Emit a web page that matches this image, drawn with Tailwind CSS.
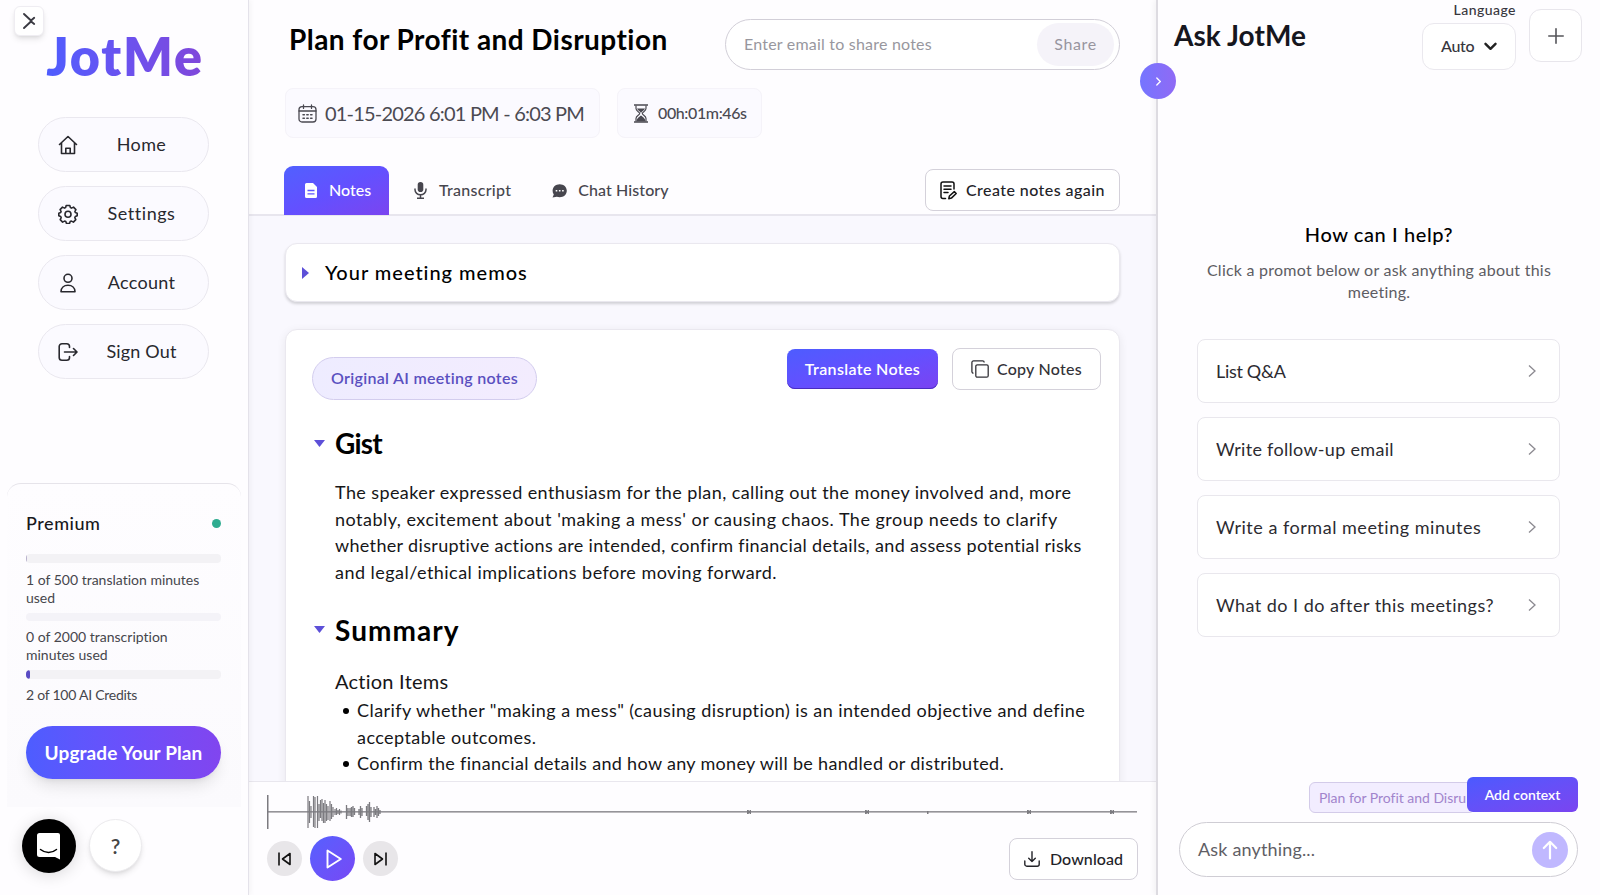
<!DOCTYPE html>
<html lang="en">
<head>
    <meta charset="UTF-8">
    <meta name="viewport" content="width=device-width, initial-scale=1.0">
    <title>JotMe - Plan for Profit and Disruption</title>
    <script src="https://cdn.jsdelivr.net/npm/@tailwindcss/browser@4"></script>
    <style>
        body {
            font-family: Lato, "Open Sans", sans-serif;
            font-variant-ligatures: none;
        }
    </style>
</head>
<body class="relative flex h-screen overflow-hidden bg-[#fefdff] text-black">

    <!-- Sidebar -->
    <aside class="relative flex w-[249px] shrink-0 flex-col border-r border-[#e4e2ea] bg-[#fefdff] shadow-[2px_0_5px_rgba(0,0,0,0.04)] z-10">
        <button class="absolute left-[14px] top-[6px] flex size-[30px] items-center justify-center rounded-md border border-[#efedf2] bg-white shadow-md">
            <svg class="h-[18px] w-[14px]" viewBox="0 0 14 18" fill="none" stroke="#3a3a42" stroke-width="1.9" stroke-linecap="round" stroke-linejoin="round"><path d="M2 2l7.5 7L2 16M12.2 5.8L8.5 9l3.7 3"/></svg>
        </button>
        <div class="mt-[23px] flex h-[66px] items-center justify-center">
            <span class="bg-linear-to-r from-[#4d5dff] via-[#6a52ef] to-[#8047da] bg-clip-text pl-[2px] text-[52px] font-extrabold leading-[66px] tracking-[0.035em] text-transparent">JotMe</span>
        </div>

        <nav class="mt-[28px] flex flex-col gap-[14px] pl-[38px] text-[18px] text-[#28282e]">
            <a class="flex h-[55px] w-[171px] items-center rounded-full border border-[#eae8ef] bg-[#fbfaff] pl-[19px]">
                <svg class="size-5" viewBox="0 0 20 20" fill="none" stroke="currentColor" stroke-width="1.6" stroke-linecap="round" stroke-linejoin="round"><path d="M1.5 9.5L10 1.5l8.500 8M3.500 8v10.500h13V8M7.800 18.500v-5.300h4.400v5.300"/></svg>
                <span class="ml-[13px] w-[101px] text-center tracking-[0.019em]">Home</span>
            </a>
            <a class="flex h-[55px] w-[171px] items-center rounded-full border border-[#eae8ef] bg-[#fbfaff] pl-[19px]">
                <svg class="size-5" viewBox="0 0 20 20" fill="none" stroke="currentColor" stroke-width="1.6" stroke-linejoin="round"><path d="M8.200 1.500h3.600l.6 2.100 1.100.5 2-1 2.400 2.500-1 1.900.4 1.100 1.900.7v2.400l-1.900.8-.5 1.200 1 1.900-2.400 2.500-2-1-1.200.5-.7 2H8.500l-.7-2-1.200-.5-2 1-2.400-2.500 1-1.900-.5-1.200-1.900-.8V9.300l1.900-.7.4-1.100-1-1.900 2.400-2.500 2 1 1.100-.5z"/><circle cx="10" cy="10.300" r="3"/></svg>
                <span class="ml-[13px] w-[101px] text-center tracking-[0.03em]">Settings</span>
            </a>
            <a class="flex h-[55px] w-[171px] items-center rounded-full border border-[#eae8ef] bg-[#fbfaff] pl-[19px]">
                <svg class="size-5" viewBox="0 0 20 20" fill="none" stroke="currentColor" stroke-width="1.6" stroke-linejoin="round"><circle cx="10" cy="5.300" r="4"/><path d="M3 18.700c0-4 2.900-6.400 7-6.400s7 2.400 7 6.400z"/></svg>
                <span class="ml-[13px] w-[101px] text-center tracking-[0.015em]">Account</span>
            </a>
            <a class="flex h-[55px] w-[171px] items-center rounded-full border border-[#eae8ef] bg-[#fbfaff] pl-[19px]">
                <svg class="size-5" viewBox="0 0 20 20" fill="none" stroke="currentColor" stroke-width="1.6" stroke-linecap="round" stroke-linejoin="round"><path d="M11.500 5.500V4.500a2.800 2.800 0 0 0-2.800-2.800H4a2.800 2.800 0 0 0-2.800 2.800v11A2.800 2.800 0 0 0 4 18.300h4.700a2.800 2.800 0 0 0 2.800-2.800v-1M6.500 10h12.300M15.500 6.500L19 10l-3.500 3.500"/></svg>
                <span class="ml-[13px] w-[101px] text-center tracking-[0.01em]">Sign Out</span>
            </a>
        </nav>

        <!-- Plan usage -->
        <section class="mx-[7px] mt-[104px] h-[324px] rounded-t-[14px] border-t border-[#e6e4ea] bg-linear-to-b from-[#fefdff] to-[#fbfafd] pl-[19px] pt-[27px] text-[14px] leading-[18px] text-[#46464c]">
            <div class="flex w-[195px] items-center justify-between">
                <h3 class="text-[18px] font-medium leading-6 tracking-[0.03em] text-[#18181c]">Premium</h3>
                <span class="size-[9px] rounded-full bg-[#2fac90]"></span>
            </div>
            <div class="mt-[19px] h-[9px] w-[195px] overflow-hidden rounded-sm bg-[#f3f2f5]">
                <div class="h-full bg-[#b9b2cc]" style="width: 0.5%"></div>
            </div>
            <p class="mt-[8px] w-[190px]">1 of 500 translation minutes used</p>
            <div class="mt-[6px] h-[8px] w-[195px] rounded-sm bg-[#f4f3f8]"></div>
            <p class="mt-[7px] w-[170px]">0 of 2000 transcription minutes used</p>
            <div class="mt-[6px] h-[9px] w-[195px] overflow-hidden rounded-sm bg-[#f3f2f5]">
                <div class="h-full rounded-sm bg-[#5a4cc4]" style="width: 2%"></div>
            </div>
            <p class="mt-[7px] tracking-[-0.018em]">2 of 100 AI Credits</p>
            <button class="mt-[22px] h-[53px] w-[195px] rounded-full bg-linear-to-r from-[#4d5dff] via-[#6a50fb] to-[#8145ef] text-[19px] font-bold tracking-[0.006em] text-white shadow-lg">Upgrade Your Plan</button>
        </section>

        <div class="mt-[12px] flex gap-[13px] pl-[22px]">
            <button class="flex size-[54px] items-center justify-center rounded-full bg-black shadow-[0_2px_16px_rgba(0,0,0,0.15)]">
                <svg class="size-7" viewBox="0 0 28 28"><path d="M4.500 1h18.500a2 2 0 0 1 2 2v24.500l-5-2.500H4.500a2.500 2.500 0 0 1-2.500-2.500V3.500A2.500 2.500 0 0 1 4.500 1z" fill="#fff"/><path d="M5.500 17.500c4.600 3.900 11.500 3.900 16 0" fill="none" stroke="#000" stroke-width="1.5" stroke-linecap="round"/></svg>
            </button>
            <button class="flex size-[53px] items-center justify-center rounded-full border border-[#ecebee] bg-white text-[21px] font-semibold text-[#444] shadow-md">?</button>
        </div>
    </aside>

    <!-- Meeting notes -->
    <main class="flex min-w-0 flex-1 flex-col">
        <header class="flex h-[216px] shrink-0 flex-col border-b-2 border-[#e8e6ee] px-9">
            <div class="flex items-start justify-between">
                <h1 class="ml-1 mt-[19px] text-[28px] font-bold leading-10 tracking-[0.016em]">Plan for Profit and Disruption</h1>
                <div class="mt-[19px] flex h-[51px] w-[395px] items-center justify-between rounded-full border border-[#d2cfd8] bg-white pl-[18px] pr-[5px] text-[16px]">
                    <span class="pb-px tracking-[0.013em] text-[#98979e]">Enter email to share notes</span>
                    <button class="h-[43px] w-[77px] rounded-full bg-[#f5f3f9] pb-px tracking-[0.04em] text-[#98959f]">Share</button>
                </div>
            </div>

            <div class="mt-[18px] flex gap-[17px] text-[#4b4a52]">
                <div class="flex h-[50px] w-[315px] items-center rounded-lg border border-[#f5f3f9] bg-[#fbfaff] pl-[12px]">
                    <svg class="size-[19px]" viewBox="0 0 19 19" fill="none" stroke="currentColor" stroke-width="1.3" stroke-linecap="round"><rect x="1" y="2.700" width="17" height="15.300" rx="3"/><path d="M1 7h17M5.500 1v3.400M13.500 1v3.400"/><path d="M5 10.800h1.400M8.800 10.800h1.400M12.600 10.800H14M5 14.200h1.400M8.800 14.200h1.400M12.600 14.200H14" stroke-width="1.500"/></svg>
                    <span class="ml-[8px] whitespace-nowrap text-[20px] tracking-[-0.04em]">01-15-2026 6:01 PM - 6:03 PM</span>
                </div>
                <div class="flex h-[50px] w-[145px] items-center rounded-lg border border-[#f5f3f9] bg-[#fbfaff] pl-[15px]">
                    <svg class="h-[19px] w-4" viewBox="0 0 16 19"><path d="M1 1h14M1 18h14" stroke="currentColor" stroke-width="1.600"/><path d="M3 1.500v3c0 2.500 3.700 3.500 3.700 5S3 12 3 14.500v3M13 1.500v3c0 2.500-3.700 3.500-3.700 5S13 12 13 14.500v3" fill="none" stroke="currentColor" stroke-width="1.200"/><path d="M4 4.500h8c-.6 2-3 2.800-4 4.500-1-1.700-3.400-2.500-4-4.500zM3.500 17.500c0-3 2.500-4.500 4.500-6 2 1.500 4.500 3 4.500 6z" fill="currentColor"/></svg>
                    <span class="ml-[9px] text-[16px] font-medium tracking-[-0.024em]">00h:01m:46s</span>
                </div>
            </div>

            <div class="mt-[28px] flex h-[49px] items-start justify-between text-[16px] font-medium">
                <div class="-ml-px flex text-[#47464e]">
                    <button class="flex h-[49px] w-[105px] items-center rounded-t-[9px] bg-linear-to-br from-[#5060ff] via-[#6350ff] to-[#7a44f0] pl-[21px] text-white">
                        <svg class="h-[15px] w-3" viewBox="0 0 12 15"><path d="M1.500 0H8l4 4v9.500a1.500 1.500 0 0 1-1.500 1.500h-9A1.500 1.500 0 0 1 0 13.500v-12A1.500 1.500 0 0 1 1.500 0z" fill="#fff"/><path d="M2.500 7.500h7M2.500 10.800h7" stroke="#5f55ff" stroke-width="1.300"/></svg>
                        <span class="ml-[12px] pb-[2px]">Notes</span>
                    </button>
                    <button class="ml-[25px] flex h-[49px] items-center">
                        <svg class="h-[17px] w-[13px]" viewBox="0 0 13 17"><rect x="3.700" y="0" width="5.600" height="10" rx="2.800" fill="currentColor"/><path d="M1 6.500v1.300a5.500 5 0 0 0 11 0V6.500M6.500 13v3M3 16.200h7" fill="none" stroke="currentColor" stroke-width="1.500"/></svg>
                        <span class="ml-[12px] pb-[2px] tracking-[0.017em]">Transcript</span>
                    </button>
                    <button class="ml-[41px] flex h-[49px] items-center">
                        <svg class="h-[14px] w-[15px]" viewBox="0 0 15 14"><path d="M7.700.3c4 0 7.100 2.800 7.100 6.500s-3.100 6.500-7.100 6.500c-1 0-2-.2-2.900-.5L.5 13.400l1.300-2.900A6.100 6.100 0 0 1 .6 6.800C.6 3.100 3.700.3 7.700.3z" fill="currentColor"/><path d="M3.700 6.800h1.600M6.900 6.800h1.600M10.100 6.800h1.600" stroke="#fff" stroke-width="1.500"/></svg>
                        <span class="ml-[11px] pb-[2px] tracking-[0.006em]">Chat History</span>
                    </button>
                </div>
                <button class="mt-[3px] flex h-[42px] w-[195px] items-center rounded-lg border border-[#d4d1da] bg-white pl-[14px] text-[#232328]">
                    <svg class="h-[19px] w-[17px]" viewBox="0 0 17 19" fill="none" stroke="#111" stroke-width="1.500" stroke-linecap="round" stroke-linejoin="round"><path d="M14 8V3a2 2 0 0 0-2-2H3a2 2 0 0 0-2 2v12.500a2 2 0 0 0 2 2h2.500M4 5h7M4 8.300h7M4 11.600h4"/><path d="M8.800 17.700l.6-2.700 4.900-4.400 1.900 1.900-4.800 4.600z"/></svg>
                    <span class="ml-[9px] tracking-[0.027em]">Create notes again</span>
                </button>
            </div>
        </header>

        <div class="flex min-h-0 flex-1 flex-col gap-[27px] overflow-hidden bg-[#f9f8fe] px-9 pt-[27px]">
            <div class="flex h-[59px] shrink-0 items-center rounded-xl border border-[#eae8ef] bg-white pl-[16px] shadow-[0_2px_3px_rgba(0,0,0,0.16)]">
                <svg class="h-3 w-[7px]" viewBox="0 0 7 12"><path d="M0 0l7 6-7 6z" fill="#5d50d8"/></svg>
                <h2 class="ml-[16px] pb-[2px] text-[20px] font-medium tracking-[0.049em]">Your meeting memos</h2>
            </div>

            <article class="h-[560px] shrink-0 rounded-xl border border-[#eae8ef] bg-white pl-[26px] pr-[18px] shadow-[0_2px_10px_rgba(0,0,0,0.07)]">
                <div class="flex justify-between">
                    <span class="mt-[27px] flex h-[43px] w-[225px] items-center justify-center rounded-full border border-[#d3cdee] bg-linear-to-r from-[#eeecff] to-[#f3ecfe] pb-[2px] text-[16px] font-semibold tracking-[0.019em] text-[#5a50c0]">Original AI meeting notes</span>
                    <div class="mt-[18px] flex items-center gap-[14px] self-start text-[16px]">
                        <button class="h-[40px] w-[151px] rounded-lg bg-linear-to-br from-[#4d5cff] via-[#6350ff] to-[#7a42f2] font-semibold tracking-[0.022em] text-white shadow-[inset_0_-1px_0_#4a2cc0]">Translate Notes</button>
                        <button class="flex h-[42px] w-[149px] items-center rounded-lg border border-[#d4d1da] bg-white pl-[18px] font-medium text-[#333238]">
                            <svg class="size-[18px]" viewBox="0 0 18 18" fill="none" stroke="currentColor" stroke-width="1.300" stroke-linejoin="round"><rect x="4.800" y="4.800" width="12.400" height="12.400" rx="1.500"/><path d="M2.500 13.200a1.600 1.600 0 0 1-1.600-1.600V2.500A1.600 1.600 0 0 1 2.500.9h9.100a1.600 1.600 0 0 1 1.600 1.600"/></svg>
                            <span class="ml-[8px] tracking-[0.015em]">Copy Notes</span>
                        </button>
                    </div>
                </div>

                <div class="mt-[23px] flex items-center pl-[2px]">
                    <svg class="h-[7px] w-[11px]" viewBox="0 0 11 7"><path d="M0 0h11L5.500 7z" fill="#5d50d8"/></svg>
                    <h2 class="ml-[10px] text-[28px] font-bold leading-10 tracking-[-0.03em]">Gist</h2>
                </div>
                <p class="mt-[16px] whitespace-nowrap pl-[23px] text-[18px] leading-[26.7px] tracking-[0.0225em] text-[#161618]">
                    The speaker expressed enthusiasm for the plan, calling out the money involved and, more<br>
                    <span class="tracking-[0.027em]">notably, excitement about 'making a mess' or causing chaos. The group needs to clarify</span><br>
                    <span class="tracking-[0.0185em]">whether disruptive actions are intended, confirm financial details, and assess potential risks</span><br>
                    <span class="tracking-[0.026em]">and legal/ethical implications before moving forward.</span>
                </p>

                <div class="mt-[24px] flex items-center pl-[2px]">
                    <svg class="h-[7px] w-[11px]" viewBox="0 0 11 7"><path d="M0 0h11L5.500 7z" fill="#5d50d8"/></svg>
                    <h2 class="ml-[10px] text-[28px] font-bold leading-10 tracking-[0.038em]">Summary</h2>
                </div>
                <h3 class="mt-[17px] pl-[23px] text-[20px] leading-[29px] tracking-[0.012em] text-[#161618]">Action Items</h3>
                <ul class="mt-px whitespace-nowrap pl-[31px] text-[18px] leading-[26.7px] tracking-[0.024em] text-[#161618]">
                    <li class="flex gap-[8px]"><span class="mt-[11px] size-[6px] rounded-full bg-black"></span><span>Clarify whether "making a mess" (causing disruption) is an intended objective and define<br>acceptable outcomes.</span></li>
                    <li class="flex gap-[8px] tracking-[0.018em]"><span class="mt-[11px] size-[6px] rounded-full bg-black"></span><span>Confirm the financial details and how any money will be handled or distributed.</span></li>
                </ul>
            </article>
        </div>

        <!-- Audio player -->
        <footer class="relative h-[114px] shrink-0 border-t border-[#e9e7ee] bg-[#fefdff] px-[18px] pt-[13px]">
            <svg class="h-[34px] w-[870px]" viewBox="0 0 870 34" fill="#7c7b80">
                <rect x="0" y="0" width="1.500" height="34"/>
                <rect x="0" y="16.200" width="870" height="1.300"/>
                <path d="M41 1v32M42.500 6v22M44 11v12M46.500 1v31M48 2v31M50.500 1v32M52 9v17M53.500 5v18M55 4v22M56.500 8v20M58 5v23M59.500 9v17M61 11v14M63 6v20M64.500 9v15M66 12v10M68 14v6M69.500 13v7M71 15v4M72.500 14v6M74 15.500v3" fill="none" stroke="#7c7b80" stroke-width="1.200"/>
                <path d="M79.500 10v14M81 13v8M83 13v8M84.500 12v10M86 11v11M87.500 13v7M92 14v6M93.500 11v12M95 13v8M99.500 11v10M101 9v16M102.500 7v20M104 12v10M107 12v10M108.500 14v6M110 11v12M111.500 13v8M113 15v4" fill="none" stroke="#7c7b80" stroke-width="1.300"/>
                <path d="M480 15h1.500l.7 1 .8-1h1v4h-1l-.8-1-.7 1H480zM598 15h1.500l.7 1 .8-1h1v4h-1l-.8-1-.7 1H598zM660 16h1.500v3H660zM760 15h1.500l.7 1 .8-1h1v4h-1l-.8-1-.7 1H760zM843 15h1.500l.7 1 .8-1h1v4h-1l-.8-1-.7 1H843z"/>
            </svg>
            <div class="mt-[7px] flex items-center justify-between">
                <div class="flex items-center gap-[8px]">
                    <button class="flex size-[35px] items-center justify-center rounded-full bg-[#e8e6e9]">
                        <svg class="h-[14px] w-[13px]" viewBox="0 0 13 14" fill="none" stroke="#111" stroke-width="1.600" stroke-linejoin="round"><path d="M1 .5v13M12 1.500v11L4.500 7z"/></svg>
                    </button>
                    <button class="flex size-[45px] items-center justify-center rounded-full bg-linear-to-br from-[#5560ff] to-[#7648f5] pl-[2px]">
                        <svg class="h-5 w-4" viewBox="0 0 16 20" fill="none" stroke="#fff" stroke-width="1.900" stroke-linejoin="round"><path d="M1.500 1.500v17L14.800 10z"/></svg>
                    </button>
                    <button class="flex size-[35px] items-center justify-center rounded-full bg-[#e8e6e9]">
                        <svg class="h-[14px] w-[13px]" viewBox="0 0 13 14" fill="none" stroke="#111" stroke-width="1.600" stroke-linejoin="round"><path d="M12 .5v13M1 1.500v11L8.500 7z"/></svg>
                    </button>
                </div>
                <button class="flex h-[42px] w-[129px] items-center rounded-lg border border-[#d4d1da] bg-white pl-[14px] text-[16px] font-medium text-[#232328]">
                    <svg class="size-4" viewBox="0 0 16 16" fill="none" stroke="currentColor" stroke-width="1.400" stroke-linecap="round" stroke-linejoin="round"><path d="M8 .8v9.700M4.700 7.300L8 10.500l3.300-3.200M.8 10v3.200a2 2 0 0 0 2 2h10.400a2 2 0 0 0 2-2V10"/></svg>
                    <span class="ml-[10px] tracking-[0.004em]">Download</span>
                </button>
            </div>
        </footer>
    </main>

    <!-- Chat panel -->
    <aside class="relative flex w-[444px] shrink-0 flex-col border-l-2 border-[#dddbe1] bg-[#fefdff] shadow-[-2px_0_6px_rgba(0,0,0,0.05)]">
        <button class="absolute -left-[18px] top-[63px] flex size-[36px] items-center justify-center rounded-full bg-linear-to-r from-[#7575ff] to-[#8f6af5]">
            <svg class="h-[9px] w-[5px]" viewBox="0 0 5 9" fill="none" stroke="#fff" stroke-width="1.300" stroke-linecap="round"><path d="M.8 1l3.500 3.500L.8 8"/></svg>
        </button>
        <div class="flex justify-between pl-[16px] pr-[18px]">
            <h2 class="mt-[15px] text-[28px] font-bold leading-10 tracking-[0.002em] text-[#16161e]">Ask JotMe</h2>
            <div class="flex gap-[13px]">
                <div class="flex flex-col items-end text-[#37363d]">
                    <span class="mt-[1px] text-[14px] font-medium leading-[18px] tracking-[0.033em]">Language</span>
                    <button class="mt-[4px] flex h-[47px] w-[94px] items-center rounded-xl border border-[#eae8ee] bg-white pl-[18px] text-[16px] font-medium">
                        <span class="pb-px tracking-[-0.02em]">Auto</span>
                        <svg class="ml-[10px] h-[9px] w-[13px]" viewBox="0 0 13 9" fill="none" stroke="#222" stroke-width="2.400" stroke-linecap="round" stroke-linejoin="round"><path d="M1.500 1.800l5 5 5-5"/></svg>
                    </button>
                </div>
                <button class="mt-[9px] flex size-[53px] items-center justify-center rounded-xl border border-[#e8e6ec] bg-white">
                    <svg class="size-4" viewBox="0 0 16 16" stroke="#55555a" stroke-width="1.600" stroke-linecap="round"><path d="M8 .8v14.400M.8 8h14.400"/></svg>
                </button>
            </div>
        </div>

        <div class="mt-[150px] text-center">
            <h3 class="text-[20px] font-medium leading-7 tracking-[0.03em]">How can I help?</h3>
            <p class="mt-[11px] text-[16px] leading-[22px] tracking-[0.015em] text-[#5d5c63]">Click a promot below or ask anything about this<br>meeting.</p>
        </div>
        <div class="mt-[36px] flex flex-col gap-[14px] pl-[39px] pr-[40px] text-[18px] text-[#2c2b31]">
            <button class="flex h-[64px] items-center justify-between rounded-lg border border-[#e9e7ed] bg-white pl-[18px] pr-[23px]">
                <span class="tracking-[-0.018em]">List Q&amp;A</span>
                <svg class="h-3 w-[8px]" viewBox="0 0 8 12" fill="none" stroke="#8b8990" stroke-width="1.300"><path d="M1 .5L7 6l-6 5.500"/></svg>
            </button>
            <button class="flex h-[64px] items-center justify-between rounded-lg border border-[#e9e7ed] bg-white pl-[18px] pr-[23px]">
                <span class="tracking-[0.017em]">Write follow-up email</span>
                <svg class="h-3 w-[8px]" viewBox="0 0 8 12" fill="none" stroke="#8b8990" stroke-width="1.300"><path d="M1 .5L7 6l-6 5.500"/></svg>
            </button>
            <button class="flex h-[64px] items-center justify-between rounded-lg border border-[#e9e7ed] bg-white pl-[18px] pr-[23px]">
                <span class="tracking-[0.029em]">Write a formal meeting minutes</span>
                <svg class="h-3 w-[8px]" viewBox="0 0 8 12" fill="none" stroke="#8b8990" stroke-width="1.300"><path d="M1 .5L7 6l-6 5.500"/></svg>
            </button>
            <button class="flex h-[64px] items-center justify-between rounded-lg border border-[#e9e7ed] bg-white pl-[18px] pr-[23px]">
                <span class="tracking-[0.026em]">What do I do after this meetings?</span>
                <svg class="h-3 w-[8px]" viewBox="0 0 8 12" fill="none" stroke="#8b8990" stroke-width="1.300"><path d="M1 .5L7 6l-6 5.500"/></svg>
            </button>
        </div>

        <div class="mt-auto mb-[18px] pl-[21px] pr-[22px]">
            <div class="flex items-end justify-end text-[14px]">
                <div class="-mr-[8px] flex h-[31px] w-[166px] items-center whitespace-nowrap rounded-md border border-[#d3cbe9] bg-[#f2edff] pb-px pl-[9px] tracking-[-0.002em] text-[#a184cc]">Plan for Profit and Disru</div>
                <button class="relative mb-px h-[35px] w-[111px] rounded-md bg-linear-to-br from-[#4a5aff] to-[#7a44f0] font-semibold text-white">Add context</button>
            </div>
            <div class="mt-[9px] flex h-[55px] items-center justify-between rounded-full border border-[#cfcdd4] bg-white pl-[18px] pr-[9px]">
                <span class="text-[18px] tracking-[0.009em] text-[#5f5e65]">Ask anything...</span>
                <button class="flex size-[36px] items-center justify-center rounded-full bg-[#c0b8ff]">
                    <svg class="h-5 w-4" viewBox="0 0 16 20" fill="none" stroke="#fff" stroke-width="2.200" stroke-linecap="round" stroke-linejoin="round"><path d="M8 18.500V2M1.800 8L8 1.800 14.200 8"/></svg>
                </button>
            </div>
        </div>
    </aside>
</body>
</html>
